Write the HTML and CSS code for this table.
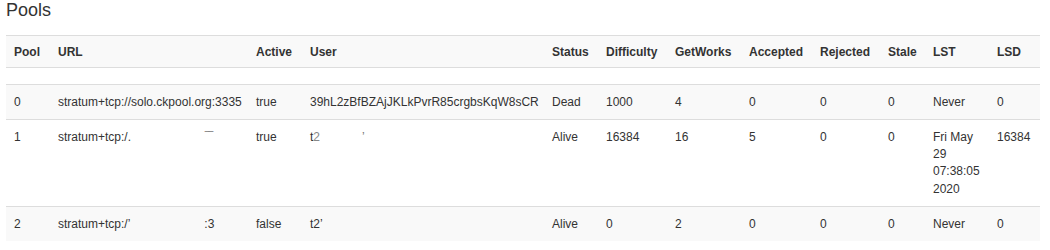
FILE: index.html
```html
<!DOCTYPE html>
<html>
<head>
<meta charset="utf-8">
<link rel="stylesheet" href="styles.css">
</head>
<body>
<div class="page">
  <h4 class="title">Pools</h4>
  <table class="pools">
    <colgroup>
      <col class="c-pool"><col class="c-url"><col class="c-active"><col class="c-user">
      <col class="c-status"><col class="c-diff"><col class="c-gw"><col class="c-acc">
      <col class="c-rej"><col class="c-stale"><col class="c-lst"><col class="c-lsd">
    </colgroup>
    <thead>
      <tr>
        <th>Pool</th><th>URL</th><th>Active</th><th>User</th><th>Status</th><th>Difficulty</th>
        <th>GetWorks</th><th>Accepted</th><th>Rejected</th><th>Stale</th><th>LST</th><th>LSD</th>
      </tr>
    </thead>
    <tbody>
      <tr class="empty">
        <td></td><td></td><td></td><td></td><td></td><td></td><td></td><td></td><td></td><td></td><td></td><td></td>
      </tr>
      <tr>
        <td>0</td><td>stratum+tcp://solo.ckpool.org:3335</td><td>true</td><td>39hL2zBfBZAjJKLkPvrR85crgbsKqW8sCR</td>
        <td>Dead</td><td>1000</td><td>4</td><td>0</td><td>0</td><td>0</td><td>Never</td><td>0</td>
      </tr>
      <tr>
        <td>1</td><td>stratum+tcp:/.<span class="frag f-url1">&#8254;&#8254;</span></td><td>true</td><td>t<span class="faint">2</span><span class="frag f-user1">&#8217;</span></td>
        <td>Alive</td><td>16384</td><td>16</td><td>5</td><td>0</td><td>0</td><td>Fri May 29 07:38:05 2020</td><td>16384</td>
      </tr>
      <tr>
        <td>2</td><td>stratum+tcp:/&#8217;<span class="frag f-url2">:3</span></td><td>false</td><td>t2&#8217;</td>
        <td>Alive</td><td>0</td><td>2</td><td>0</td><td>0</td><td>0</td><td>Never</td><td>0</td>
      </tr>
    </tbody>
  </table>
</div>
</body>
</html>
```

FILE: styles.css
```css
html, body {
  margin: 0;
  padding: 0;
  background: #ffffff;
}

.page {
  padding: 0 10px 0 6px;
  font-family: "Liberation Sans", Arial, Helvetica, sans-serif;
  color: #333333;
}

.title {
  margin: 0 0 15px 0;
  font-size: 18px;
  font-weight: normal;
  line-height: 20px;
  color: #333333;
}

.pools {
  width: 1034px;
  table-layout: fixed;
  border-collapse: collapse;
  border-spacing: 0;
  font-size: 12px;
  line-height: 17.14px;
}

.c-pool { width: 44px; }
.c-url { width: 198px; }
.c-active { width: 54px; }
.c-user { width: 242px; }
.c-status { width: 54px; }
.c-diff { width: 69px; }
.c-gw { width: 74px; }
.c-acc { width: 71px; }
.c-rej { width: 68px; }
.c-stale { width: 45px; }
.c-lst { width: 64px; }
.c-lsd { width: 51px; }

.pools th,
.pools td {
  padding: 9px 8px 8px 8px;
  text-align: left;
  vertical-align: top;
  border-top: 1px solid #dddddd;
  overflow: hidden;
  white-space: normal;
}

.pools th {
  font-weight: bold;
  padding-top: 8px;
  padding-bottom: 7px;
  line-height: 16px;
}

.pools thead tr {
  background: #f9f9f9;
}

.pools thead th {
  border-bottom: 1px solid #dddddd;
}

.pools tbody tr:nth-child(even) {
  background: #f9f9f9;
}

.pools tbody tr.empty td {
  padding: 8px;
  height: 0;
  line-height: 0;
}

.pools td:nth-child(2),
.pools td:nth-child(4) {
  white-space: nowrap;
}

.frag {
  display: inline-block;
}

.f-url1 {
  margin-left: 74px;
  color: #777777;
}

.f-url2 {
  margin-left: 74px;
}

.f-user1 {
  margin-left: 42px;
  color: #777777;
}

.faint {
  color: #888888;
}
```
